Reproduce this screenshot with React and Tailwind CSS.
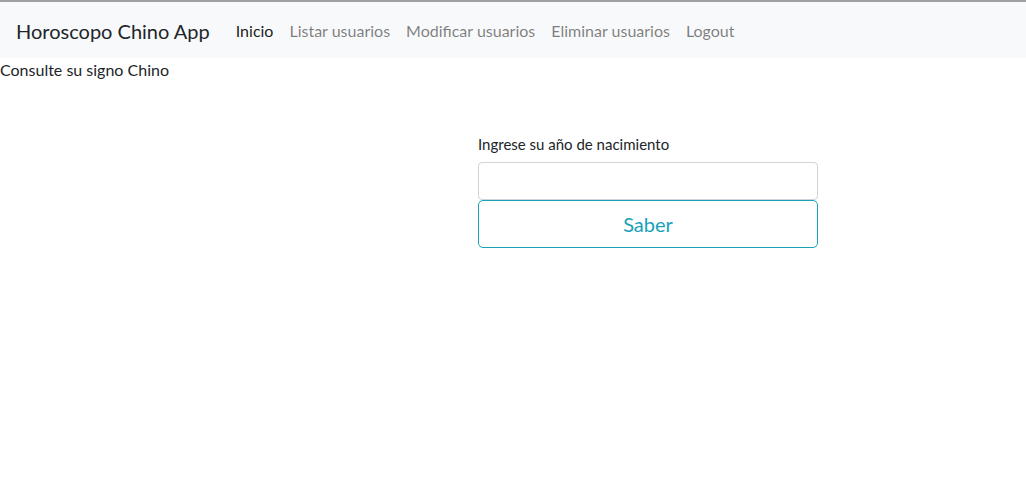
import { useState } from "react";

const links = ["Listar usuarios", "Modificar usuarios", "Eliminar usuarios", "Logout"];

const App = () => {
  const [year, setYear] = useState("");

  return (
    <div className="min-h-[493px] bg-white text-[#212529] font-['Lato',sans-serif]">
      <div className="h-[2px] bg-[#a0a0a0]" />
      <nav className="flex h-14 items-center bg-[#f8f9fa] px-4 pt-[2px]">
        <span className="mr-[18px] text-[20px] leading-[30px] text-[#212529]">Horoscopo Chino App</span>
        <a className="px-2 text-base text-[rgba(0,0,0,0.9)]">Inicio</a>
        {links.map((link) => (
          <a key={link} className="px-2 text-base text-[rgba(0,0,0,0.5)]">
            {link}
          </a>
        ))}
      </nav>
      <p className="text-base leading-6">Consulte su signo Chino</p>
      <div className="mt-12 flex pl-[478px]">
        <form className="w-[340px]" onSubmit={(e) => e.preventDefault()}>
          <label className="mb-[6px] block pt-[2px] text-[15px] leading-6">Ingrese su año de nacimiento</label>
          <input
            value={year}
            onChange={(e) => setYear(e.target.value)}
            className="block h-[38px] w-full rounded border border-[#ced4da] px-3 text-base outline-none"
          />
          <button className="block h-12 w-full rounded-[5px] border border-[#17a2b8] text-[20px] text-[#17a2b8]">
            Saber
          </button>
        </form>
      </div>
    </div>
  );
};

export default App;
